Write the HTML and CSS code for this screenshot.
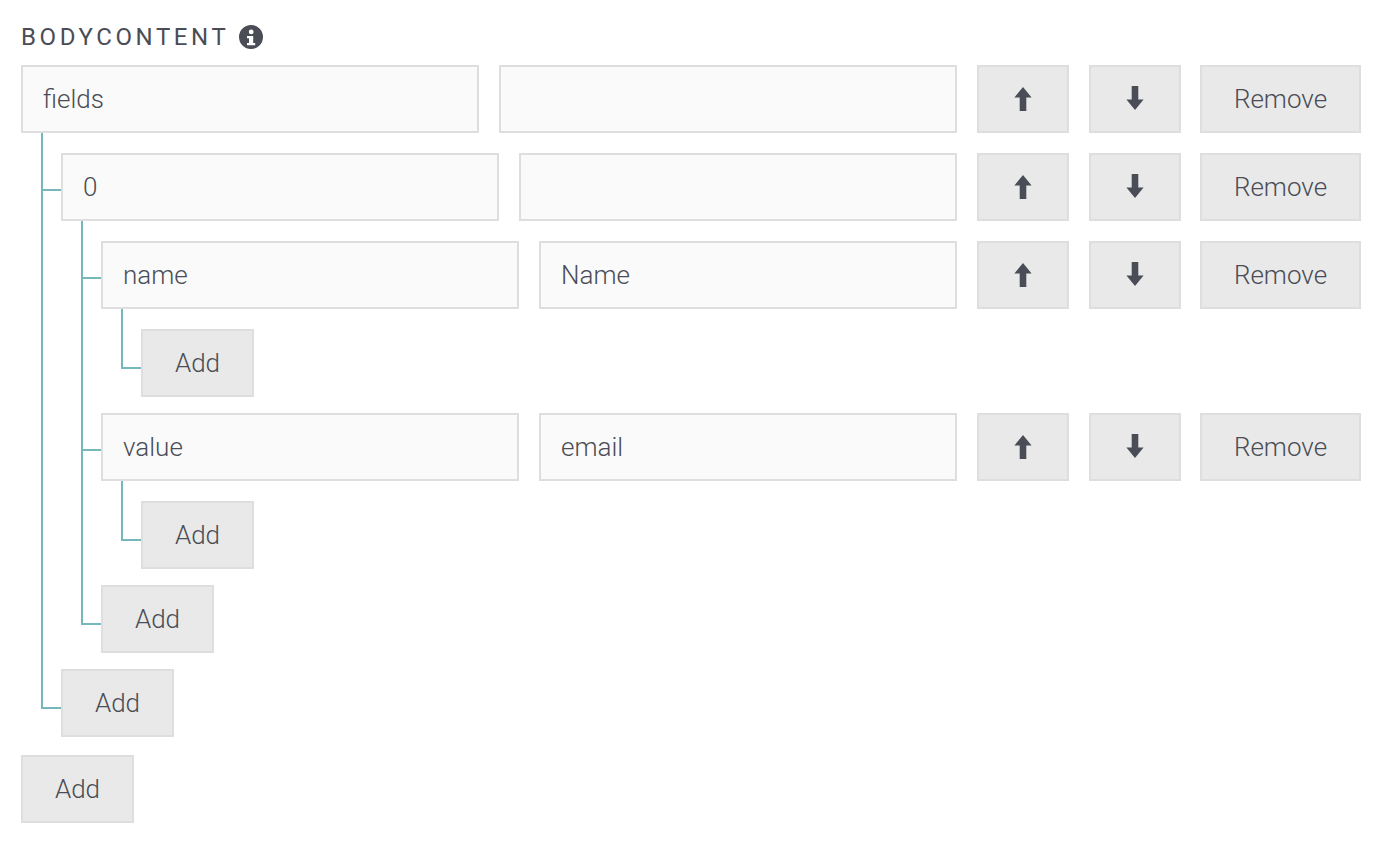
FILE: index.html
```html
<!DOCTYPE html>
<html lang="en">
<head>
<meta charset="utf-8">
<title>Body content</title>
<link rel="stylesheet" href="styles.css">
</head>
<body>
<svg class="defs" width="0" height="0" aria-hidden="true">
  <symbol id="up" viewBox="0 0 18 24"><path d="M9 0 L17.600 10.500 H12.300 V24 H5.700 V10.500 H0.400 Z"/></symbol>
  <symbol id="down" viewBox="0 0 18 24"><path d="M9 24 L17.600 13.500 H12.300 V0 H5.700 V13.500 H0.400 Z"/></symbol>
</svg>
<main class="editor">
  <div class="heading">
    <span class="title">BODYCONTENT</span>
    <svg class="info" viewBox="0 0 24 24" aria-hidden="true"><path fill-rule="evenodd" d="M12 0a12 12 0 1 0 0 24 12 12 0 0 0 0-24Zm.2 4.500a2.400 2.400 0 1 1 0 4.800 2.400 2.400 0 0 1 0-4.800ZM8 11h6.200v7h2v2.200H8V18h2v-4.800H8Z"/></svg>
  </div>
  <div class="node">
    <div class="row">
      <div class="field">fields</div><div class="field"></div>
      <button class="btn icon"><svg class="arrow"><use href="#up"/></svg></button>
      <button class="btn icon"><svg class="arrow arrow-down"><use href="#down"/></svg></button>
      <button class="btn remove">Remove</button>
    </div>
    <div class="children">
      <div class="node child">
        <div class="row">
          <div class="field">0</div><div class="field"></div>
          <button class="btn icon"><svg class="arrow"><use href="#up"/></svg></button>
          <button class="btn icon"><svg class="arrow arrow-down"><use href="#down"/></svg></button>
          <button class="btn remove">Remove</button>
        </div>
        <div class="children">
          <div class="node child">
            <div class="row">
              <div class="field">name</div><div class="field">Name</div>
              <button class="btn icon"><svg class="arrow"><use href="#up"/></svg></button>
              <button class="btn icon"><svg class="arrow arrow-down"><use href="#down"/></svg></button>
              <button class="btn remove">Remove</button>
            </div>
            <div class="children">
              <div class="child add-item"><button class="btn add">Add</button></div>
            </div>
          </div>
          <div class="node child">
            <div class="row">
              <div class="field">value</div><div class="field">email</div>
              <button class="btn icon"><svg class="arrow"><use href="#up"/></svg></button>
              <button class="btn icon"><svg class="arrow arrow-down"><use href="#down"/></svg></button>
              <button class="btn remove">Remove</button>
            </div>
            <div class="children">
              <div class="child add-item"><button class="btn add">Add</button></div>
            </div>
          </div>
          <div class="child add-item"><button class="btn add">Add</button></div>
        </div>
      </div>
      <div class="child add-item"><button class="btn add">Add</button></div>
    </div>
  </div>
  <div class="root-add"><button class="btn add">Add</button></div>
</main>
</body>
</html>
```

FILE: styles.css
```css
* { box-sizing: border-box; }
html, body { margin: 0; background: #fff; }
body {
  font-family: Roboto, "Liberation Sans", sans-serif;
  font-weight: 300;
  font-size: 26px;
  color: #4a4d55;
}
.defs { position: absolute; }
.editor { padding: 23px 29px 25px 21px; }
.heading {
  display: flex;
  align-items: center;
  gap: 10px;
  height: 28px;
  margin-bottom: 14px;
}
.title {
  font-size: 24px;
  font-weight: 400;
  letter-spacing: 3.6px;
  line-height: 28px;
}
.info { width: 24px; height: 24px; fill: #4a4d55; }
.row { display: flex; gap: 20px; height: 68px; }
.field {
  flex: 1 1 0;
  min-width: 0;
  height: 68px;
  padding: 0 20px;
  line-height: 65px;
  background: #fafafa;
  border: 2px solid #dedede;
}
.btn {
  flex: none;
  height: 68px;
  padding: 0;
  font: inherit;
  color: inherit;
  background: #e9e9e9;
  border: 2px solid #dedede;
  display: flex;
  align-items: center;
  justify-content: center;
}
.icon { width: 92px; }
.remove { width: 161px; margin-left: -1px; }
.add { width: 113px; }
.arrow { width: 18px; height: 24px; fill: #4a4d55; }
.arrow-down { margin-bottom: 2px; }
.children { padding: 20px 0 0 40px; }
.child { position: relative; margin-bottom: 16px; }
.child:last-child { margin-bottom: 0; }
.child::before {
  content: "";
  position: absolute;
  left: -20px;
  top: -16px;
  bottom: 0;
  width: 2px;
  background: #76b7bb;
}
.child:first-child::before { top: -20px; }
.child:last-child::before { bottom: auto; height: 56px; }
.child:first-child:last-child::before { height: 60px; }
.child::after {
  content: "";
  position: absolute;
  left: -20px;
  top: 36px;
  width: 20px;
  height: 2px;
  background: #76b7bb;
}
.add-item::after { top: 38px; }
.root-add { margin-top: 18px; }
```
